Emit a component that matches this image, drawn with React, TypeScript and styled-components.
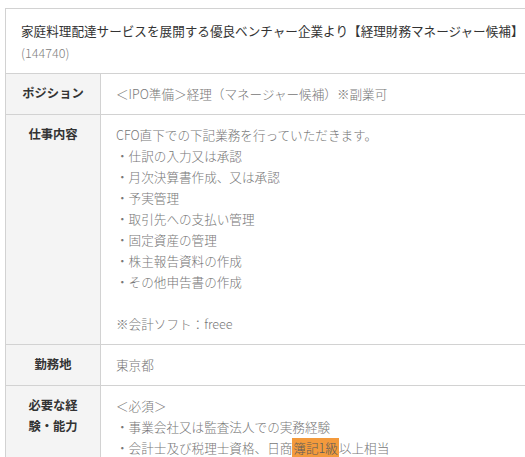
import React from "react";
import styled, { createGlobalStyle } from "styled-components";

const Global = createGlobalStyle`
  html, body {
    margin: 0;
    padding: 0;
    background: #ffffff;
    overflow: hidden;
  }
  body {
    font-family: "Noto Sans CJK JP", "Noto Sans", sans-serif;
    font-size: 12.6px;
  }
`;

const Wrapper = styled.div`
  margin: 8px 0 0 5px;
  width: 545px;
  border-top: 1px solid #d2d2d2;
  border-left: 1px solid #d2d2d2;
`;

const TitleBox = styled.div`
  padding: 11px 15px 9px;
  border-bottom: 1px solid #d2d2d2;
`;

const TitleText = styled.div`
  color: #333333;
  white-space: nowrap;
  height: 22px;
  line-height: 22px;
`;

const TitleId = styled.div`
  color: #808080;
  font-weight: 300;
  height: 22px;
  line-height: 22px;
`;

const Row = styled.div`
  display: grid;
  grid-template-columns: 95px 1fr;
  border-bottom: 1px solid #d2d2d2;
`;

const Label = styled.div`
  background: #f4f4f4;
  border-right: 1px solid #d2d2d2;
  padding: 9px 0 10px;
  font-weight: 700;
  font-size: 12.3px;
  color: #333333;
  text-align: center;
  white-space: nowrap;
`;

const Value = styled.div`
  padding: 9px 15px 10px;
  color: #777777;
  font-weight: 300;
`;

const Line = styled.div`
  height: 21px;
  line-height: 21px;
  white-space: nowrap;
`;

const Mark = styled.span`
  background: #f39a3c;
  color: #5a5a5a;
  padding: 0 1px;
`;

const jobLines = [
  "CFO直下での下記業務を行っていただきます。",
  "・仕訳の入力又は承認",
  "・月次決算書作成、又は承認",
  "・予実管理",
  "・取引先への支払い管理",
  "・固定資産の管理",
  "・株主報告資料の作成",
  "・その他申告書の作成",
  "",
  "※会計ソフト：freee",
];

export default function App() {
  return (
    <>
      <Global />
      <Wrapper>
        <TitleBox>
          <TitleText>
            家庭料理配達サービスを展開する優良ベンチャー企業より【経理財務マネージャー候補】
          </TitleText>
          <TitleId>(144740)</TitleId>
        </TitleBox>
        <Row>
          <Label>
            <Line>ポジション</Line>
          </Label>
          <Value>
            <Line>＜IPO準備＞経理（マネージャー候補）※副業可</Line>
          </Value>
        </Row>
        <Row>
          <Label>
            <Line>仕事内容</Line>
          </Label>
          <Value>
            {jobLines.map((l, i) => (
              <Line key={i}>{l}</Line>
            ))}
          </Value>
        </Row>
        <Row>
          <Label>
            <Line>勤務地</Line>
          </Label>
          <Value>
            <Line>東京都</Line>
          </Value>
        </Row>
        <Row>
          <Label>
            <Line>必要な経</Line>
            <Line>験・能力</Line>
          </Label>
          <Value>
            <Line>＜必須＞</Line>
            <Line>・事業会社又は監査法人での実務経験</Line>
            <Line>
              ・会計士及び税理士資格、日商<Mark>簿記1級</Mark>以上相当
            </Line>
          </Value>
        </Row>
      </Wrapper>
    </>
  );
}
